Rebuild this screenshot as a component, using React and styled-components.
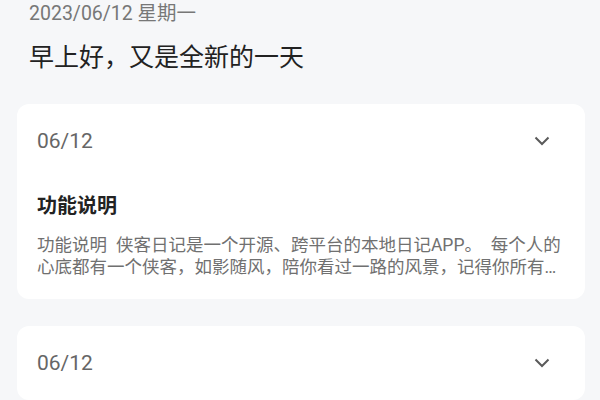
import styled, { createGlobalStyle } from "styled-components";

const GlobalStyle = createGlobalStyle`
  body {
    margin: 0;
    background: #f6f7f9;
    font-family: Roboto, "Noto Sans CJK SC", sans-serif;
  }
`;

const Page = styled.div`
  padding: 2px 15px 0 17px;
`;

const Header = styled.header`
  padding-left: 12px;
  margin-bottom: 29px;
`;

const Today = styled.div`
  font-size: 19.5px;
  line-height: 24px;
  color: #777;
`;

const Greeting = styled.h1`
  margin: 15px 0 0;
  font-size: 25px;
  line-height: 34px;
  font-weight: 400;
  color: #222;
`;

const List = styled.div`
  display: flex;
  flex-direction: column;
  gap: 27px;
`;

const Card = styled.section`
  background: #fff;
  border-radius: 12px;
  padding: 0 20px;
`;

const CardHead = styled.div`
  height: 74px;
  display: flex;
  align-items: center;
  justify-content: space-between;
`;

const CardDate = styled.span`
  font-size: 21px;
  color: #666;
`;

const Chevron = () => (
  <svg width="16" height="10" viewBox="0 0 16 10" fill="none">
    <path d="M1.5 1.5 L8 8 L14.5 1.5" stroke="#5a5a5a" strokeWidth="2" />
  </svg>
);

const Toggle = styled.span`
  display: flex;
  margin-right: 15px;
`;

const CardBody = styled.div`
  padding: 15px 0 21px;
`;

const Title = styled.h2`
  margin: 0;
  font-size: 20px;
  line-height: 26px;
  font-weight: 700;
  color: #222;
`;

const Summary = styled.p`
  margin: 15px 0 0;
  font-size: 17.5px;
  line-height: 22px;
  color: #707070;
  display: -webkit-box;
  -webkit-line-clamp: 2;
  -webkit-box-orient: vertical;
  overflow: hidden;
`;

const entries = [
  {
    date: "06/12",
    title: "功能说明",
    text:
      "功能说明\u2002侠客日记是一个开源、跨平台的本地日记APP。\u2002每个人的心底都有一个侠客，如影随风，陪你看过一路的风景，记得你所有的喜怒哀乐。",
    open: true,
  },
  { date: "06/12", open: false },
];

export default function App() {
  return (
    <>
      <GlobalStyle />
      <Page>
        <Header>
          <Today>2023/06/12 星期一</Today>
          <Greeting>早上好，又是全新的一天</Greeting>
        </Header>
        <List>
          {entries.map((e, i) => (
            <Card key={i}>
              <CardHead>
                <CardDate>{e.date}</CardDate>
                <Toggle>
                  <Chevron />
                </Toggle>
              </CardHead>
              {e.open && (
                <CardBody>
                  <Title>{e.title}</Title>
                  <Summary>{e.text}</Summary>
                </CardBody>
              )}
            </Card>
          ))}
        </List>
      </Page>
    </>
  );
}
